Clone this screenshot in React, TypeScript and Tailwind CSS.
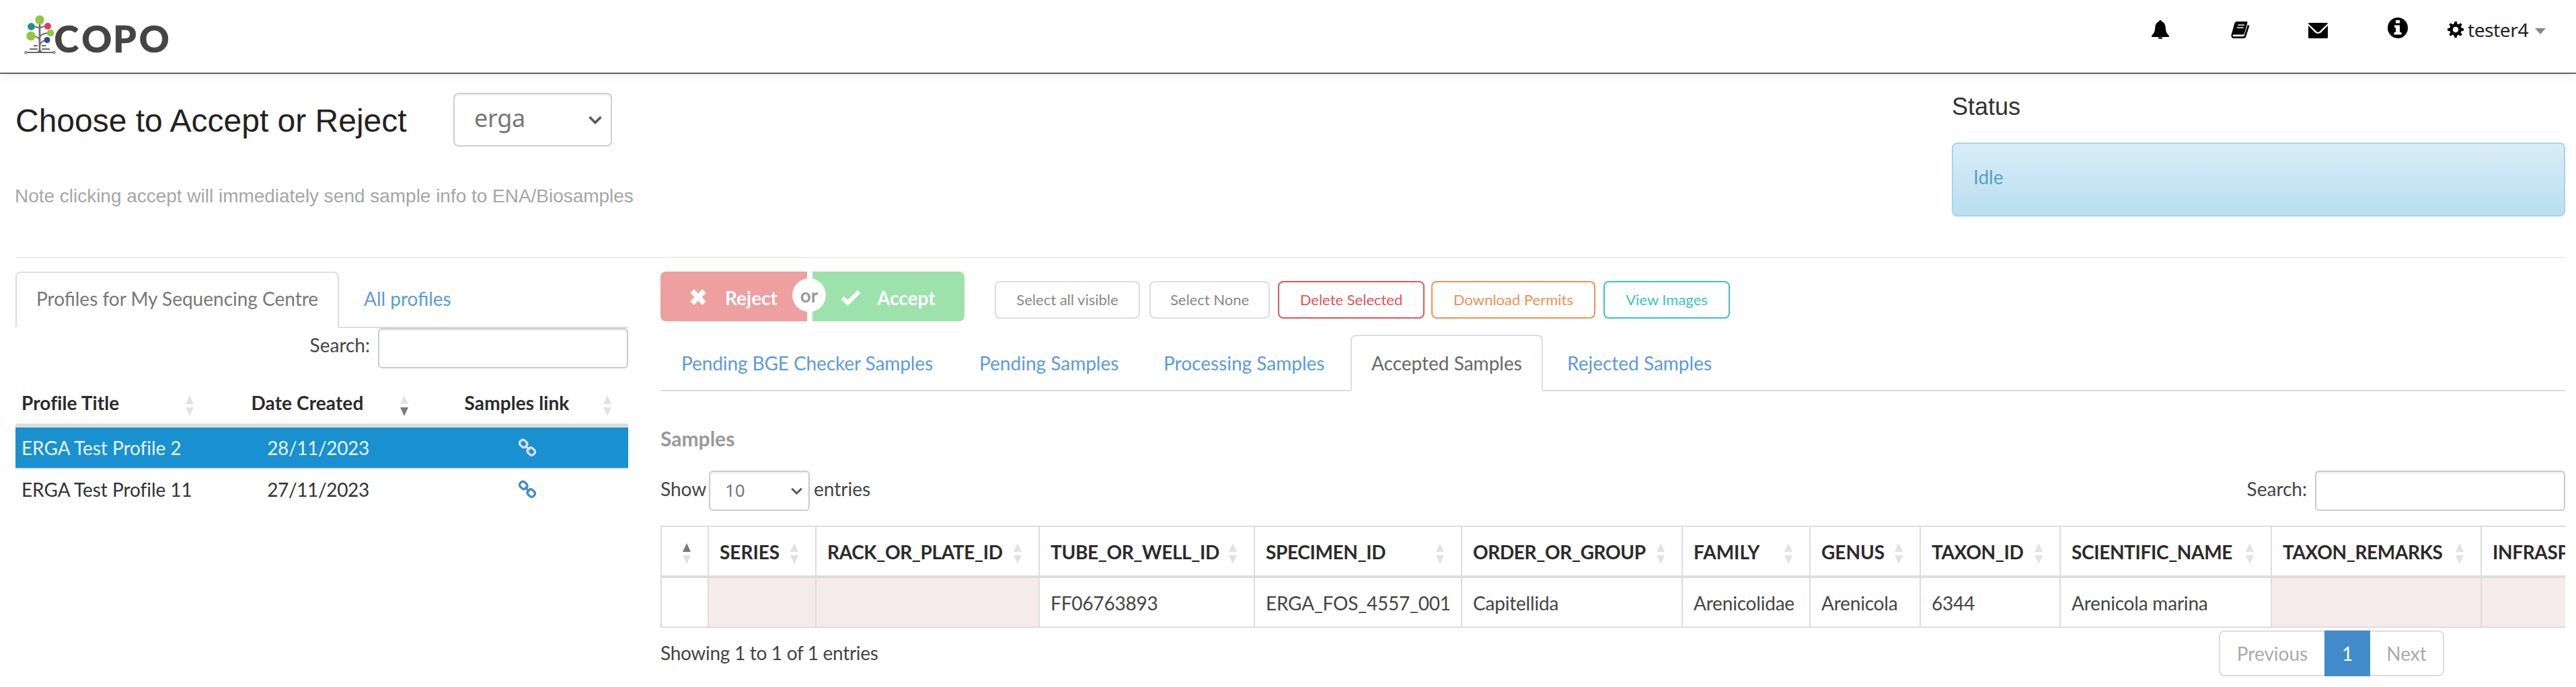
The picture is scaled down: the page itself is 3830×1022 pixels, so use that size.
import React from 'react';

const LATO = "font-['Lato',sans-serif]";
const NOTO = "font-['Noto_Sans',sans-serif]";
const ARIAL = "font-['Liberation_Sans',sans-serif]";

function Logo() {
  return (
    <svg className="overflow-visible" width="220" height="64" viewBox="0 0 220 64" aria-label="COPO">
      <g fill="none" stroke="#6c6673" strokeWidth="2">
        <path d="M23 10V57" strokeWidth="2.6" />
        <path d="M23 21C19 18 15 19 11 19M23 21C27 18 30 18 34 18" />
        <path d="M23 38C20 33 16 33 11 33M23 34C26 29 31 28 38 28" />
        <path d="M23 46C25 41 28 39 33 39" />
        <path d="M14 47H20M26 47H32M8 52H20M26 52H38M4 57H43M18 57C22 57 23 55 23 51C23 55 25 57 29 57" strokeWidth="1.8" />
        <circle cx="2.5" cy="57" r="1.7" strokeWidth="1.2" />
        <circle cx="44.5" cy="57" r="1.7" strokeWidth="1.2" />
      </g>
      <circle cx="23" cy="8.500" r="6.700" fill="#92c83e" />
      <circle cx="10.500" cy="18.500" r="5.400" fill="#1d918d" />
      <circle cx="35" cy="18" r="5" fill="#ee3468" />
      <circle cx="10" cy="32.500" r="6.700" fill="#92c83e" />
      <circle cx="39" cy="28" r="5.200" fill="#92c83e" />
      <circle cx="34" cy="38.500" r="4.500" fill="#2b4f87" />
      <text x="44.6 85.2 131.9 170.7" y="57.300" fontFamily="Lato" fontWeight="900" fontSize="55.500" fill="#444" stroke="#444" strokeWidth="0.600">COPO</text>
    </svg>
  );
}

function BellIcon() {
  return (
    <svg width="26" height="28" viewBox="0 0 26 28">
      <path d="M13 0c1.3 0 2 .8 2.2 2C19 3.500 20.500 7 20.700 11c.3 5 1.300 8 3.800 10.500.8.8 1.500 1.500 1.500 3.500H0c0-2 .700-2.700 1.500-3.500C4 19 5 16 5.300 11 5.500 7 7 3.500 10.800 2 11 .8 11.700 0 13 0ZM9.500 25.500h7c-.3 1.700-1.700 2.500-3.500 2.500s-3.200-.8-3.500-2.500Z" />
    </svg>
  );
}

function BookIcon() {
  return (
    <svg width="28" height="25" viewBox="0 0 28 25">
      <path d="M8.500 0H23q2 0 1.400 2L20 18q-.6 1.600-2.300 1.600H4.200q-1.500 0-1.700 1.400.1 1.200 1.700 1.200H18q1.500 0 2-1.500L24.800 5l1.800.8q.8.500.4 1.800L22.300 22.500Q21.500 25 19 25H3.800Q0 24.500.5 19.800L5.400 2.600Q6 0 8.500 0Z" />
      <path d="M10.200 5.200H20M8.900 9.300H18.700" stroke="#fff" strokeWidth="1.600" />
    </svg>
  );
}

function EnvelopeIcon() {
  return (
    <svg width="29" height="23" viewBox="0 0 29 23">
      <path d="M1 0h27q1 0 1 1L16.500 13q-2 1.800-4 0L0 1.300Q0 0 1 0ZM0 4l10 10.300q4.500 3.600 9 0L29 4v18q0 1-1 1H1q-1 0-1-1Z" />
    </svg>
  );
}

function InfoIcon() {
  return (
    <svg width="30" height="31" viewBox="0 0 30 31">
      <ellipse cx="15" cy="15.500" rx="15" ry="15.500" />
      <path d="M12 4h6v4.500h-6ZM10 11.500h8v10.500h2.500v3.500H9.500V22H12v-7h-2Z" fill="#fff" />
    </svg>
  );
}

function CogIcon() {
  const teeth = [0, 45, 90, 135, 180, 225, 270, 315];
  return (
    <svg width="24" height="24" viewBox="0 0 24 24">
      <circle cx="12" cy="12" r="6.600" fill="none" stroke="#000" strokeWidth="4.800" />
      {teeth.map((a) => (
        <path key={a} d="M9.600 4 10.300 0h3.400l.7 4Z" transform={`rotate(${a} 12 12)`} />
      ))}
    </svg>
  );
}

function Chevron({ w }: { w: number }) {
  return (
    <svg width={w} height={w * 0.65} viewBox="0 0 20 13" fill="none" stroke="#555" strokeWidth="3.400">
      <path d="M1.500 2 10 10.500 18.500 2" />
    </svg>
  );
}

function LinkIcon({ color }: { color: string }) {
  return (
    <svg className="block" width="28" height="28" viewBox="0 0 28 28" fill="none" stroke={color} strokeWidth="3.400">
      <rect x="-5.700" y="-4.700" width="11.400" height="9.400" rx="3.800" transform="translate(8.200 8) rotate(45)" />
      <rect x="-5.700" y="-4.700" width="11.400" height="9.400" rx="3.800" transform="translate(19.800 19.500) rotate(45)" />
      <path d="M10.500 10.500 17.500 17.300" strokeWidth="3" />
    </svg>
  );
}

function Sort({ active }: { active?: 'up' | 'down' }) {
  return (
    <svg className="block shrink-0" width="14" height="31" viewBox="0 0 14 31">
      <path d="M7 0 13 13H1Z" fill={active === 'up' ? '#7a7a7a' : '#e2e2e2'} />
      <path d="M7 31 1 18H13Z" fill={active === 'down' ? '#7a7a7a' : '#e2e2e2'} />
    </svg>
  );
}

function Header() {
  return (
    <header className="flex h-[110px] justify-between border-b-2 border-[#606060] bg-white shadow-[0_2px_16px_rgba(0,0,0,0.08)]">
      <div className="pt-[21px] pl-[36px]">
        <Logo />
      </div>
      <div className="flex items-start pr-[45px]">
        <div className="mt-[30px] w-[118px]"><BellIcon /></div>
        <div className="mt-[32px] w-[115px]"><BookIcon /></div>
        <div className="mt-[34px] w-[118px]"><EnvelopeIcon /></div>
        <div className="mt-[26px] w-[89px]"><InfoIcon /></div>
        <div className="mt-[32px] w-[30px]"><CogIcon /></div>
        <span className={`${NOTO} mt-[24px] w-[100px] text-[28px] leading-[40px] tracking-[-0.4px] text-[#222]`}>tester4</span>
        <svg className="mt-[42px]" width="16" height="9" viewBox="0 0 16 9"><path d="M0 0H16L8 9Z" fill="#888" /></svg>
      </div>
    </header>
  );
}

function Intro() {
  return (
    <section className="mr-[16px] ml-[23px] flex h-[274px] justify-between border-b-2 border-[#eee]">
      <div>
        <div className="flex items-start pt-[28px]">
          <h2 className={`${ARIAL} mt-[2px] w-[651px] text-[48px] leading-[80px] text-[#222]`}>Choose to Accept or Reject</h2>
          <div className="flex h-[80px] w-[236px] items-center justify-between rounded-[8px] border-2 border-[#d0d0d0] pr-[13px] pb-[4px] pl-[29px] shadow-[inset_0_2px_2px_rgba(0,0,0,0.075)]">
            <span className={`${NOTO} text-[36px] leading-[48px] tracking-[-0.3px] text-[#777]`}>erga</span>
            <span className="pt-[5px]"><Chevron w={20} /></span>
          </div>
        </div>
        <p className={`${ARIAL} -ml-px mt-[52px] text-[28px] leading-[40px] tracking-[-0.02px] text-[#a6a6a6]`}>
          Note clicking accept will immediately send sample info to ENA/Biosamples
        </p>
      </div>
      <div className="w-[912px] pt-[29px]">
        <h4 className={`${ARIAL} text-[36px] leading-[40px] text-[#333]`}>Status</h4>
        <div className="mt-[33px] h-[110px] rounded-[8px] border-2 border-[#a5d6ec] bg-linear-to-b from-[#d9edf7] to-[#b9def0] pt-[29px] pl-[30px] text-[28px] leading-[40px] text-[#5a9fc6] shadow-[0_2px_4px_rgba(0,0,0,0.05)]">
          Idle
        </div>
      </div>
    </section>
  );
}

function ProfilesPanel() {
  return (
    <aside className="w-[911px] pt-[20px]">
      <div className="flex h-[84px]">
        <div className="w-[481px] rounded-t-[8px] border-2 border-[#ddd] border-b-white pt-[18px] pl-[29px] leading-[40px] text-[#777]">
          Profiles for My Sequencing Centre
        </div>
        <div className="flex-1 border-b-2 border-[#ddd] pt-[20px] pl-[37px] leading-[40px] text-[#5b9bdb]">All profiles</div>
      </div>
      <div className="flex h-[60px] items-start justify-end">
        <span className="mt-[5px] mr-[12px] leading-[40px] text-[#444]">Search:</span>
        <div className="h-[60px] w-[372px] rounded-[6px] border-2 border-[#ccc] shadow-[inset_0_2px_2px_rgba(0,0,0,0.075)]" />
      </div>
      <table className="w-[911px] table-fixed border-separate border-spacing-0">
        <colgroup>
          <col className="w-[290px]" />
          <col className="w-[320px]" />
          <col className="w-[301px]" />
        </colgroup>
        <thead>
          <tr className="h-[88px] font-bold text-[#2b2b2b]">
            <th className="border-b-6 border-[#ddd] p-0 align-top">
              <div className="flex items-start justify-between pt-[31px] pr-[24px] pl-[9px] text-left leading-[40px] tracking-[0.1px]">
                Profile Title
                <span className="pt-[9px]"><Sort /></span>
              </div>
            </th>
            <th className="border-b-6 border-[#ddd] p-0 align-top">
              <div className="flex items-start pt-[31px] pr-[25px] pl-[10px] leading-[40px] tracking-[0.1px]">
                <span className="flex-1 pr-[3px]">Date Created</span>
                <span className="pt-[9px]"><Sort active="down" /></span>
              </div>
            </th>
            <th className="border-b-6 border-[#ddd] p-0 align-top">
              <div className="flex items-start pt-[31px] pr-[24px] pl-[11px] leading-[40px] tracking-[0.1px]">
                <span className="flex-1 pr-[3px]">Samples link</span>
                <span className="pt-[9px]"><Sort /></span>
              </div>
            </th>
          </tr>
        </thead>
        <tbody>
          <tr className="h-[62px] bg-[#1990cf] text-white/90">
            <td className="border-b-2 border-[#ddd] p-0 pl-[9px] tracking-[-0.05px] leading-[40px]">ERGA Test Profile 2</td>
            <td className="border-b-2 border-[#ddd] p-0 text-center tracking-[-0.35px] leading-[40px]">28/11/2023</td>
            <td className="border-b-2 border-[#ddd] p-0"><div className="flex justify-center"><LinkIcon color="#dddddd" /></div></td>
          </tr>
          <tr className="h-[60px] text-[#333]">
            <td className="p-0 pl-[9px] tracking-[-0.05px] leading-[40px]">ERGA Test Profile 11</td>
            <td className="p-0 text-center tracking-[-0.35px] leading-[40px]">27/11/2023</td>
            <td className="p-0"><div className="flex justify-center"><LinkIcon color="#428bca" /></div></td>
          </tr>
        </tbody>
      </table>
    </aside>
  );
}

const actions = [
  { label: 'Select all visible', cls: 'w-[216px] mr-[14px] border-[#ddd] text-[#888]' },
  { label: 'Select None', cls: 'w-[179px] mr-[12px] border-[#ddd] text-[#888]' },
  { label: 'Delete Selected', cls: 'w-[218px] mr-[10px] border-[#e05557] text-[#e05557]' },
  { label: 'Download Permits', cls: 'w-[244px] mr-[12px] border-[#f29050] text-[#f29050]' },
  { label: 'View Images', cls: 'w-[188px] border-[#3cc4be] text-[#3cc4be]' },
];

function Actions() {
  return (
    <div className="flex h-[74px]">
      <div className="relative mr-[45px] flex font-bold text-white">
        <button className="mr-[8px] flex h-[74px] w-[218px] items-start rounded-l-[8px] bg-[#ee9f9f] pl-[44px]">
          <svg className="mt-[26px]" width="24" height="24" viewBox="0 0 24 24" stroke="#fff" strokeWidth="8"><path d="M3 3 21 21M21 3 3 21" /></svg>
          <span className="ml-[28px] pt-[19px] leading-[40px]">Reject</span>
        </button>
        <button className="flex h-[74px] w-[226px] items-start rounded-r-[8px] bg-[#9de2ac] pl-[42px]">
          <svg className="mt-[27px]" width="30" height="24" viewBox="0 0 30 24" fill="none" stroke="#fff" strokeWidth="6.500"><path d="M2.500 12 10.500 19.500 27 3" /></svg>
          <span className="ml-[24px] pt-[19px] leading-[40px]">Accept</span>
        </button>
        <span className="absolute top-[10px] left-[196px] flex h-[50px] w-[50px] items-center justify-center rounded-full bg-white text-[#999]">or</span>
      </div>
      {actions.map((a) => (
        <button key={a.label} className={`mt-[14px] h-[56px] rounded-[8px] border-2 pb-[2px] text-[22px] ${a.cls}`}>
          {a.label}
        </button>
      ))}
    </div>
  );
}

const tabs = [
  { label: 'Pending BGE Checker Samples', w: 'w-[443px] pl-[31px] tracking-[-0.1px]' },
  { label: 'Pending Samples', w: 'w-[274px] pl-[31px]' },
  { label: 'Processing Samples', w: 'w-[309px] pl-[31px]' },
  { label: 'Accepted Samples', w: 'w-[286px]', active: true },
  { label: 'Rejected Samples', w: 'flex-1 pl-[36px]' },
];

function Tabs() {
  return (
    <div className="mt-[20px] flex h-[84px] leading-[40px]">
      {tabs.map((t) =>
        t.active ? (
          <div key={t.label} className={`${t.w} rounded-t-[8px] border-2 border-[#ddd] border-b-white pt-[20px] pl-[29px] text-[#666]`}>{t.label}</div>
        ) : (
          <div key={t.label} className={`${t.w} border-b-2 border-[#ddd] pt-[22px] text-[#5b9bdb]`}>{t.label}</div>
        ),
      )}
    </div>
  );
}

const columns = [
  { name: '', value: '', w: 'w-[72px]' },
  { name: 'SERIES', value: null, w: 'w-[160px]' },
  { name: 'RACK_OR_PLATE_ID', value: null, w: 'w-[332px]' },
  { name: 'TUBE_OR_WELL_ID', value: 'FF06763893', w: 'w-[320px]' },
  { name: 'SPECIMEN_ID', value: 'ERGA_FOS_4557_001', w: 'w-[308px]' },
  { name: 'ORDER_OR_GROUP', value: 'Capitellida', w: 'w-[328px]' },
  { name: 'FAMILY', value: 'Arenicolidae', w: 'w-[190px]' },
  { name: 'GENUS', value: 'Arenicola', w: 'w-[164px]' },
  { name: 'TAXON_ID', value: '6344', w: 'w-[208px]' },
  { name: 'SCIENTIFIC_NAME', value: 'Arenicola marina', w: 'w-[314px]' },
  { name: 'TAXON_REMARKS', value: null, w: 'w-[312px]' },
  { name: 'INFRASPECIFIC_EPITHET', value: null, w: 'w-[390px]' },
];

function SamplesTable() {
  return (
    <div className="mt-[22px] w-[2832px] overflow-hidden">
      <table className="w-[3098px] table-fixed border-separate border-spacing-0 whitespace-nowrap">
        <colgroup>
          {columns.map((c, i) => <col key={i} className={c.w} />)}
        </colgroup>
        <thead>
          <tr className="h-[78px]">
            {columns.map((c, i) => (
              <th key={i} className={`border-t-2 border-r-2 border-b-4 border-[#ddd] p-0 align-top ${i === 0 ? 'border-l-2' : ''}`}>
                <div className={`flex justify-between pt-[17px] pr-[24px] pl-[16px] text-left leading-[40px] font-bold text-[#2b2b2b] ${c.name.length < 8 ? 'tracking-normal' : 'tracking-[-0.35px]'}`}>
                  <span>{c.name}</span>
                  <span className="pt-[7px]"><Sort active={i === 0 ? 'up' : undefined} /></span>
                </div>
              </th>
            ))}
          </tr>
        </thead>
        <tbody>
          <tr className="h-[74px]">
            {columns.map((c, i) => (
              <td key={i} className={`border-r-2 border-b-2 border-[#ddd] p-0 pl-[16px] align-top leading-[40px] text-[#444] ${i === 0 ? 'border-l-2' : ''} ${c.value === null ? 'bg-[#f5ebeb]' : ''}`}>
                <div className="pt-[17px] tracking-[-0.2px]">{c.value}</div>
              </td>
            ))}
          </tr>
        </tbody>
      </table>
    </div>
  );
}

function SamplesPanel() {
  return (
    <main className="w-[2832px] pt-[20px]">
      <Actions />
      <Tabs />
      <h4 className="mt-[50px] text-[30px] leading-[40px] font-bold text-[#999]">Samples</h4>
      <div className="mt-[28px] flex h-[60px] items-start text-[#444]">
        <span className="mt-[7px] w-[72px] leading-[40px]">Show</span>
        <div className="flex h-[60px] w-[150px] items-center justify-between rounded-[6px] border-2 border-[#ccc] pr-[9px] pl-[22px] shadow-[inset_0_2px_2px_rgba(0,0,0,0.075)]">
          <span className={`${NOTO} pb-[2px] text-[26px] leading-[40px] text-[#777]`}>10</span>
          <span className="pt-[2px]"><Chevron w={17} /></span>
        </div>
        <span className="mt-[7px] ml-[6px] leading-[40px]">entries</span>
        <span className="mt-[7px] mr-[12px] ml-auto leading-[40px]">Search:</span>
        <div className="h-[60px] w-[372px] rounded-[6px] border-2 border-[#ccc] shadow-[inset_0_2px_2px_rgba(0,0,0,0.075)]" />
      </div>
      <SamplesTable />
      <div className="flex items-start justify-between pr-[180px]">
        <span className="mt-[17px] leading-[40px] tracking-[-0.3px] text-[#444]">Showing 1 to 1 of 1 entries</span>
        <div className="mt-[4px] flex h-[68px] text-center leading-[64px] text-[#aaa]">
          <div className="w-[157px] rounded-l-[8px] border-2 border-r-0 border-[#ddd]">Previous</div>
          <div className="w-[68px] border-2 border-[#428bca] bg-[#428bca] text-white">1</div>
          <div className="w-[110px] rounded-r-[8px] border-2 border-l-0 border-[#ddd]">Next</div>
        </div>
      </div>
    </main>
  );
}

export default function App() {
  return (
    <div className={`${LATO} h-[1022px] w-[3830px] overflow-hidden bg-white text-[28px]`}>
      <Header />
      <Intro />
      <div className="mr-[16px] ml-[23px] flex justify-between">
        <ProfilesPanel />
        <SamplesPanel />
      </div>
    </div>
  );
}
